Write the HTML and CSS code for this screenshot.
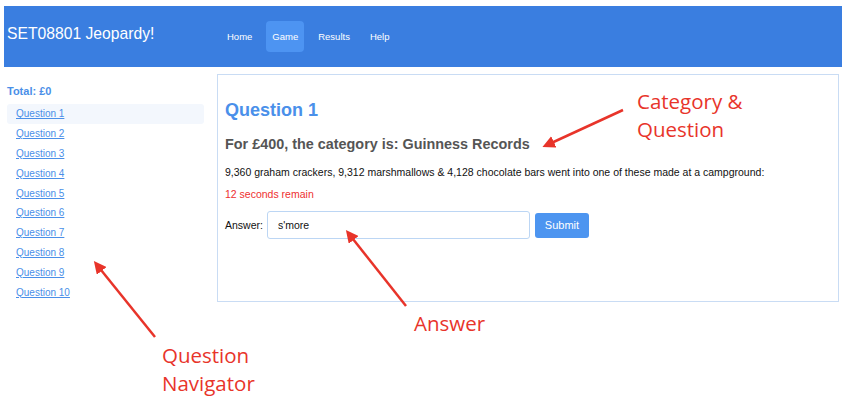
FILE: index.html
```html
<!DOCTYPE html>
<html>
<head>
<meta charset="utf-8">
<link rel="stylesheet" href="styles.css">
</head>
<body>
<header class="topbar">
  <div class="brand">SET08801 Jeopardy!</div>
  <nav class="nav">
    <a class="nav-item">Home</a>
    <a class="nav-item active">Game</a>
    <a class="nav-item">Results</a>
    <a class="nav-item">Help</a>
  </nav>
</header>
<div class="layout">
  <aside class="sidebar">
    <div class="total">Total: £0</div>
    <ul class="qlist">
      <li class="current"><a>Question 1</a></li>
      <li><a>Question 2</a></li>
      <li><a>Question 3</a></li>
      <li><a>Question 4</a></li>
      <li><a>Question 5</a></li>
      <li><a>Question 6</a></li>
      <li><a>Question 7</a></li>
      <li><a>Question 8</a></li>
      <li><a>Question 9</a></li>
      <li><a>Question 10</a></li>
    </ul>
  </aside>
  <main class="card">
    <h1 class="qtitle">Question 1</h1>
    <h2 class="category">For £400, the category is: Guinness Records</h2>
    <p class="clue">9,360 graham crackers, 9,312 marshmallows &amp; 4,128 chocolate bars went into one of these made at a campground:</p>
    <p class="timer">12 seconds remain</p>
    <form class="answer-row">
      <label class="answer-label">Answer:</label>
      <input class="answer-input" type="text" value="s'more">
      <button class="submit" type="button">Submit</button>
    </form>
  </main>
</div>

<div class="annotations">
  <svg class="arrows" width="850" height="413" viewBox="0 0 850 413">
    <defs>
      <marker id="ah" markerWidth="5" markerHeight="5" refX="3" refY="2.5" orient="auto" markerUnits="strokeWidth">
        <path d="M0,0 L5,2.5 L0,5 Z" fill="#e8342a"/>
      </marker>
    </defs>
    <line x1="623" y1="110" x2="547" y2="145" stroke="#e8342a" stroke-width="2.5" marker-end="url(#ah)"/>
    <line x1="155" y1="337" x2="97" y2="265" stroke="#e8342a" stroke-width="2.5" marker-end="url(#ah)"/>
    <line x1="406" y1="306" x2="349" y2="234" stroke="#e8342a" stroke-width="2.5" marker-end="url(#ah)"/>
  </svg>
  <div class="note note-cat">Category &amp;<br>Question</div>
  <div class="note note-ans">Answer</div>
  <div class="note note-nav">Question<br>Navigator</div>
</div>
</body>
</html>
```
FILE: styles.css
```css
* { box-sizing: border-box; }
html, body { margin: 0; padding: 0; background: #fff; }
body {
  font-family: "Liberation Sans", Arial, sans-serif;
  padding: 6px 8px 0 4px;
  width: 850px;
  height: 413px;
  position: relative;
  overflow: hidden;
}
.topbar {
  height: 61px;
  background: #3a7ee0;
  display: flex;
  align-items: center;
  padding-left: 3px;
}
.brand {
  color: #fff;
  font-size: 15.7px;
  width: 214px;
  margin-top: -6px;
}
.nav { display: flex; align-items: center; gap: 8px; }
.nav-item {
  color: #fff;
  font-size: 9.5px;
  padding: 9px 6px;
  border-radius: 4px;
  line-height: 12px;
}
.nav-item.active {
  background: #4d94f2;
  height: 31px;
  display: flex;
  align-items: center;
}
.layout {
  display: flex;
  margin-top: 7px;
}
.sidebar {
  width: 213px;
  padding-top: 11px;
}
.total {
  color: #4a8fe8;
  font-weight: bold;
  font-size: 11px;
  padding-left: 3px;
  margin-bottom: 7px;
}
.qlist { list-style: none; margin: 0; padding: 0; }
.qlist li {
  height: 19.8px;
  display: flex;
  align-items: center;
  padding-left: 9px;
  margin-left: 3px;
  width: 197px;
  border-radius: 3px;
}
.qlist li.current { background: #f3f7fd; }
.qlist a {
  color: #4a8fe8;
  font-size: 10px;
  text-decoration: underline;
}
.card {
  width: 622px;
  height: 228px;
  border: 1px solid #c9dcf4;
  padding: 0 7px;
}
.qtitle {
  color: #4a90ea;
  font-size: 18px;
  margin: 24px 0 0;
  line-height: 22px;
}
.category {
  color: #555;
  font-size: 14.4px;
  margin: 15px 0 0;
  line-height: 17px;
}
.clue {
  font-size: 10.5px;
  margin: 12px 0 0;
  line-height: 14px;
  color: #111;
}
.timer {
  font-size: 10.5px;
  color: #ee3030;
  margin: 8px 0 0;
  line-height: 14px;
}
.answer-row {
  display: flex;
  align-items: center;
  margin-top: 10px;
}
.answer-label { font-size: 10.5px; color: #111; margin-right: 4px; }
.answer-input {
  width: 263px;
  height: 28px;
  border: 1px solid #bcd6f4;
  border-radius: 3px;
  font-family: "Liberation Sans", Arial, sans-serif;
  font-size: 10.5px;
  padding: 0 10px;
  color: #111;
  outline: none;
}
.submit {
  margin-left: 5px;
  width: 54px;
  height: 25px;
  background: #4d95f0;
  color: #fff;
  border: none;
  border-radius: 3px;
  font-family: "Liberation Sans", Arial, sans-serif;
  font-size: 11px;
}
.annotations { position: absolute; left: 0; top: 0; width: 850px; height: 413px; pointer-events: none; }
.arrows { position: absolute; left: 0; top: 0; }
.note {
  position: absolute;
  color: #e8342a;
  font-family: "Open Sans", "Liberation Sans", sans-serif;
  font-size: 20.5px;
  line-height: 28px;
}
.note-cat { left: 637px; top: 87px; }
.note-ans { left: 414px; top: 309px; }
.note-nav { left: 162px; top: 341px; }
```
